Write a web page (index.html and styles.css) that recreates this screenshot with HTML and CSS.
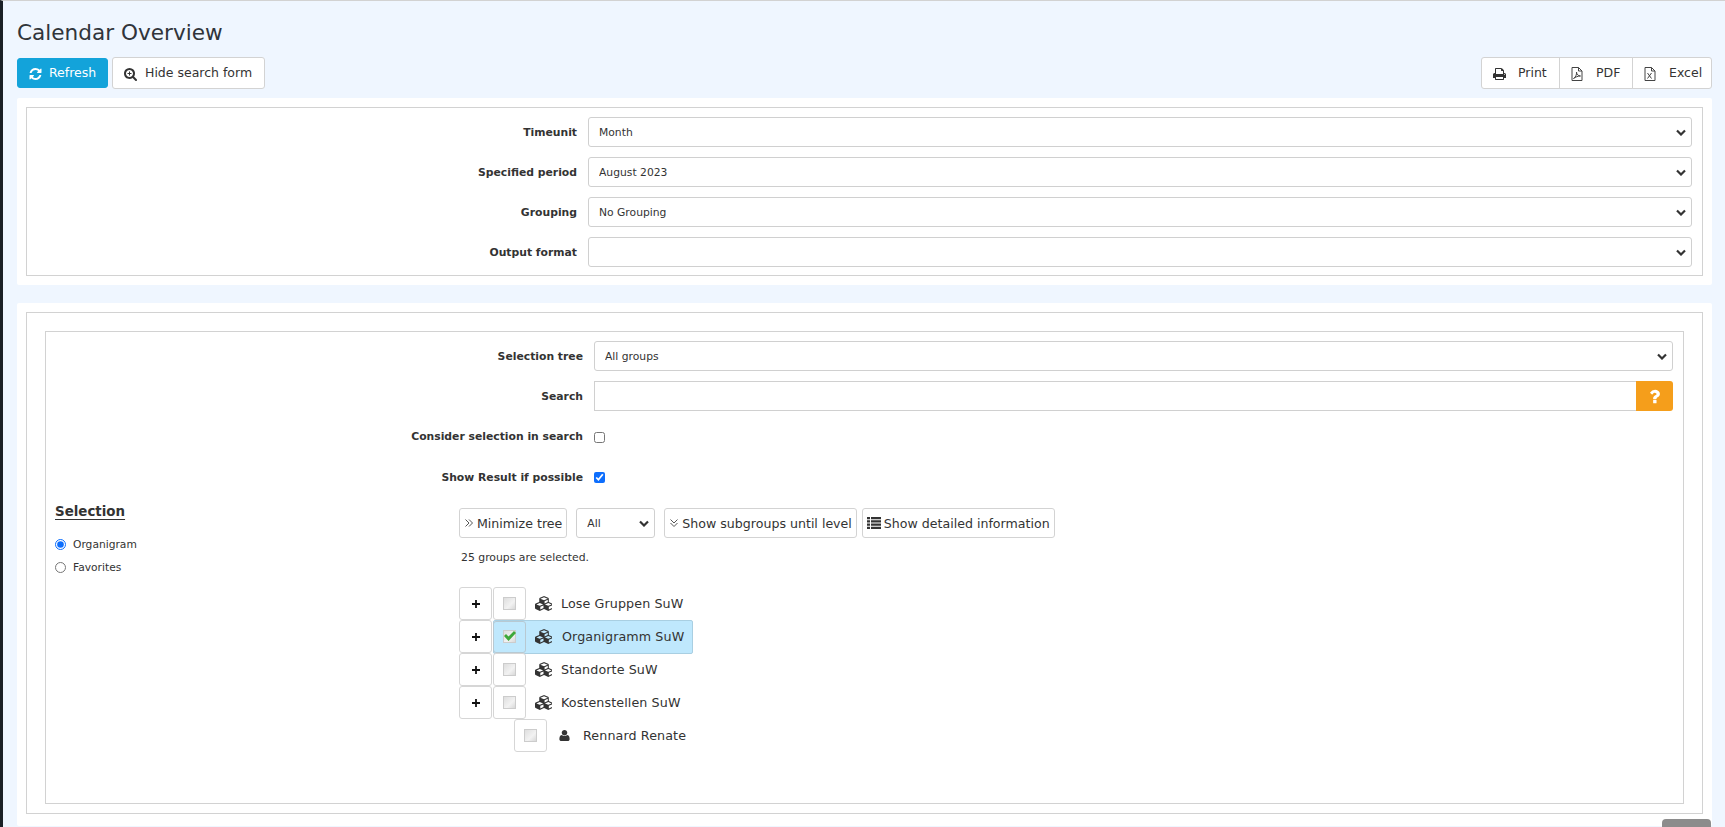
FILE: index.html
```html
<!DOCTYPE html>
<html lang="en">
<head>
<meta charset="utf-8">
<title>Calendar Overview</title>
<link rel="stylesheet" href="styles.css">
</head>
<body>
<svg class="defs" width="0" height="0" aria-hidden="true">
  <symbol id="i-refresh" viewBox="0 0 1536 1792"><path d="M1511 1056q0 5-1 7-64 268-268 434.5t-478 166.5q-146 0-282.5-55t-243.5-157l-129 129q-19 19-45 19t-45-19-19-45v-448q0-26 19-45t45-19h448q26 0 45 19t19 45-19 45l-137 137q71 66 161 102t187 36q134 0 250-65t186-179q11-17 53-117 8-23 30-23h192q13 0 22.5 9.5t9.5 22.5zm25-800v448q0 26-19 45t-45 19h-448q-26 0-45-19t-19-45 19-45l138-138q-148-137-349-137-134 0-250 65t-186 179q-11 17-53 117-8 23-30 23h-199q-13 0-22.5-9.5t-9.5-22.5v-7q65-268 270-434.5t480-166.5q146 0 284 55.5t245 156.5l130-129q19-19 45-19t45 19 19 45z"/></symbol>
  <symbol id="i-zoom" viewBox="0 0 1664 1792"><path d="M1152 832q0-185-131.5-316.5t-316.5-131.5-316.5 131.5-131.5 316.5 131.5 316.5 316.5 131.5 316.5-131.5 131.5-316.5zm512 832q0 52-38 90t-90 38q-54 0-90-38l-343-342q-179 124-399 124-143 0-273.5-55.5t-225-150-150-225-55.5-273.5 55.5-273.5 150-225 225-150 273.5-55.5 273.5 55.5 225 150 150 225 55.5 273.5q0 220-124 399l343 343q37 37 37 90z"/><rect x="448" y="768" width="512" height="128"/><rect x="640" y="576" width="128" height="512"/></symbol>
  <symbol id="i-print" viewBox="0 0 1664 1792"><path d="M384 1536h896v-256h-896v256zm0-640h896v-384h-160q-40 0-68-28t-28-68v-160h-640v640zm1152 64q0-26-19-45t-45-19-45 19-19 45 19 45 45 19 45-19 19-45zm128 0v416q0 13-9.5 22.5t-22.5 9.5h-224v160q0 40-28 68t-68 28h-960q-40 0-68-28t-28-68v-160h-224q-13 0-22.5-9.5t-9.5-22.5v-416q0-79 56.5-135.5t135.5-56.5h64v-544q0-40 28-68t68-28h672q40 0 88 20t76 48l152 152q28 28 48 76t20 88v256h64q79 0 135.5 56.5t56.5 135.5z"/></symbol>
  <symbol id="i-pdf" viewBox="0 0 12 14"><path class="line" d="M1 .5h6.500l3.500 3.500v9.500H1zM7.500.5V4H11"/><path class="line" d="M2.500 11.500c2-1 3.400-4 3-6.500.2 2.500 1.600 3.800 4 4-2.500 0-5 1-7 2.500z"/></symbol>
  <symbol id="i-excel" viewBox="0 0 12 14"><path class="line" d="M1 .5h6.500l3.500 3.500v9.500H1zM7.500.5V4H11"/><path class="line" d="M3.500 6l4 5.500M7.500 6l-4 5.500"/></symbol>
  <symbol id="i-double-right" viewBox="0 0 10 10"><path class="line" d="M1.500 1.500 5 5 1.500 8.500M5 1.500 8.500 5 5 8.500"/></symbol>
  <symbol id="i-double-down" viewBox="0 0 10 10"><path class="line" d="M1.500 1.500 5 5l3.500-3.500M1.500 5 5 8.500 8.500 5"/></symbol>
  <symbol id="i-list" viewBox="0 0 14 12"><path d="M0 0h3v2.200H0zM4 0h10v2.200H4zM0 3.200h3v2.200H0zM4 3.200h10v2.200H4zM0 6.500h3v2.200H0zM4 6.500h10v2.200H4zM0 9.700h3V12H0zM4 9.700h10V12H4z"/></symbol>
  <symbol id="i-plus" viewBox="0 0 9 9"><path d="M3.500 0h2v3.500H9v2H5.500V9h-2V5.500H0v-2h3.500z"/></symbol>
  <symbol id="i-cubes" viewBox="0 0 2048 1792"><path d="M640 1632l384-192v-314l-384 164v342zm-64-454l404-173-404-173-404 173zm1088 454l384-192v-314l-384 164v342zm-64-454l404-173-404-173-404 173zm-448-293l384-165v-266l-384 164v267zm-64-379l441-189-441-189-441 189zm1088 518v416q0 36-19 67t-52 47l-448 224q-25 14-57 14t-57-14l-448-224q-4-2-7-4-2 2-7 4l-448 224q-25 14-57 14t-57-14l-448-224q-33-16-52-47t-19-67v-416q0-38 21.500-70t56.500-48l434-186v-400q0-38 21.500-70t56.500-48l448-192q23-10 50-10t50 10l448 192q35 16 56.500 48t21.500 70v400l434 186q36 16 57 48t21 70z"/></symbol>
  <symbol id="i-user" viewBox="0 0 1408 1792"><path d="M1408 1405q0 120-73 189.500t-194 69.500h-874q-121 0-194-69.500t-73-189.500q0-53 3.500-103.500t14-109 26.500-108.500 43-97.500 62-81 85.500-53.500 111.500-20q9 0 42 21.500t74.500 48 108 48 133.500 21.500 133.500-21.500 108-48 74.500-48 42-21.500q61 0 111.500 20t85.500 53.500 62 81 43 97.500 26.500 108.500 14 109 3.500 103.500zm-320-893q0 159-112.500 271.500t-271.500 112.500-271.500-112.500-112.500-271.500 112.500-271.500 271.500-112.500 271.500 112.500 112.500 271.500z"/></symbol>
  <symbol id="i-question" viewBox="0 0 1024 1792"><path d="M704 1256v240q0 16-12 28t-28 12h-240q-16 0-28-12t-12-28v-240q0-16 12-28t28-12h240q16 0 28 12t12 28zm316-600q0 54-15.500 101t-35 76.500-55 59.500-57.500 43.500-61 35.500q-41 23-68.500 65t-27.500 67q0 17-12 32.500t-28 15.500h-240q-15 0-25.500-18.500t-10.500-37.500v-45q0-83 65-156.500t143-108.500q59-27 84-56t25-76q0-42-46.500-74t-107.500-32q-65 0-108 29-35 25-107 115-13 16-31 16-12 0-25-8l-164-125q-13-10-15.500-25t5.500-28q160-266 464-266 80 0 161 31t146 83 106 127.500 41 158.500z"/></symbol>
  <symbol id="i-check" viewBox="0 0 12 10"><path d="M0 5 2 3 4.500 5.500 10 0 12 2 4.500 10z"/></symbol>
</svg>

<main class="page">
  <h1 class="title">Calendar Overview</h1>

  <div class="toolbar">
    <div class="tool-left">
      <button class="btn btn-primary" type="button"><svg class="ico ico-13"><use href="#i-refresh"/></svg>Refresh</button>
      <button class="btn btn-hide" type="button"><svg class="ico ico-13"><use href="#i-zoom"/></svg>Hide search form</button>
    </div>
    <div class="btn-group">
      <button class="btn btn-print" type="button"><svg class="ico ico-13"><use href="#i-print"/></svg>Print</button>
      <button class="btn btn-pdf" type="button"><svg class="ico ico-doc"><use href="#i-pdf"/></svg>PDF</button>
      <button class="btn btn-excel" type="button"><svg class="ico ico-doc"><use href="#i-excel"/></svg>Excel</button>
    </div>
  </div>

  <section class="panel panel-top">
    <div class="box form-box">
      <div class="row"><label class="lab">Timeunit</label><select class="sel"><option>Month</option></select></div>
      <div class="row"><label class="lab">Specified period</label><select class="sel"><option>August 2023</option></select></div>
      <div class="row"><label class="lab">Grouping</label><select class="sel"><option>No Grouping</option></select></div>
      <div class="row"><label class="lab">Output format</label><select class="sel"><option></option></select></div>
    </div>
  </section>

  <section class="panel panel-bottom">
    <div class="box box-outer">
      <div class="box box-inner">
        <div class="row row-wide"><label class="lab">Selection tree</label><select class="sel"><option>All groups</option></select></div>
        <div class="row row-wide"><label class="lab">Search</label>
          <div class="search">
            <input class="search-input" type="text">
            <button class="help" type="button"><svg class="ico ico-help"><use href="#i-question"/></svg></button>
          </div>
        </div>
        <div class="row row-wide row-check"><label class="lab">Consider selection in search</label><input class="chk" type="checkbox"></div>
        <div class="row row-wide row-check"><label class="lab">Show Result if possible</label><input class="chk" type="checkbox" checked></div>

        <div class="selection">
          <aside class="sel-side">
            <h2 class="sel-head">Selection</h2>
            <label class="radio"><input type="radio" name="mode" checked>Organigram</label>
            <label class="radio"><input type="radio" name="mode">Favorites</label>
          </aside>
          <div class="sel-main">
            <div class="tree-tools">
              <button class="tbtn" type="button"><svg class="ico ico-chev"><use href="#i-double-right"/></svg>Minimize tree</button>
              <select class="sel sel-small"><option>All</option></select>
              <button class="tbtn tbtn-sub" type="button"><svg class="ico ico-chev"><use href="#i-double-down"/></svg>Show subgroups until level</button>
              <button class="tbtn tbtn-det" type="button"><svg class="ico ico-list"><use href="#i-list"/></svg>Show detailed information</button>
            </div>
            <p class="count">25 groups are selected.</p>
            <ul class="tree">
              <li class="node">
                <button class="tree-btn" type="button"><svg class="ico ico-plus"><use href="#i-plus"/></svg></button>
                <span class="tree-btn"><span class="tick"></span></span>
                <svg class="ico ico-cubes"><use href="#i-cubes"/></svg><span class="node-text">Lose Gruppen SuW</span>
              </li>
              <li class="node">
                <button class="tree-btn" type="button"><svg class="ico ico-plus"><use href="#i-plus"/></svg></button>
                <span class="picked">
                  <span class="tree-btn tree-btn-on"><span class="tick"><svg class="ico ico-check"><use href="#i-check"/></svg></span></span>
                  <svg class="ico ico-cubes"><use href="#i-cubes"/></svg><span class="node-text">Organigramm SuW</span>
                </span>
              </li>
              <li class="node">
                <button class="tree-btn" type="button"><svg class="ico ico-plus"><use href="#i-plus"/></svg></button>
                <span class="tree-btn"><span class="tick"></span></span>
                <svg class="ico ico-cubes"><use href="#i-cubes"/></svg><span class="node-text">Standorte SuW</span>
              </li>
              <li class="node">
                <button class="tree-btn" type="button"><svg class="ico ico-plus"><use href="#i-plus"/></svg></button>
                <span class="tree-btn"><span class="tick"></span></span>
                <svg class="ico ico-cubes"><use href="#i-cubes"/></svg><span class="node-text">Kostenstellen SuW</span>
              </li>
              <li class="node node-user">
                <span class="tree-btn"><span class="tick"></span></span>
                <svg class="ico ico-user"><use href="#i-user"/></svg><span class="node-text">Rennard Renate</span>
              </li>
            </ul>
          </div>
        </div>
      </div>
    </div>
  </section>
</main>
<div class="scroll-top"></div>
</body>
</html>
```

FILE: styles.css
```css
* { box-sizing: border-box; }
html, body { height: 100%; }
body {
  margin: 0;
  height: 827px;
  overflow: hidden;
  background: #eff6ff;
  border-left: 3px solid #1a2026;
  border-top: 1px solid #d2d2d2;
  font-family: "DejaVu Sans", Verdana, sans-serif;
  color: #333;
}
.defs { position: absolute; }
.ico { display: block; flex: none; fill: currentColor; }
.line { fill: none; stroke: currentColor; stroke-width: 1; }
.ico-13 { width: 13px; height: 14px; }
.ico-doc { width: 12px; height: 14px; color: #444; }
.ico-chev { width: 10px; height: 10px; color: #555; }
.ico-list { width: 14px; height: 12px; }
.ico-help { width: 11px; height: 19px; color: #fff; }
.ico-plus { width: 8px; height: 8px; color: #111; }
.ico-cubes { width: 17px; height: 15px; color: #333; }
.ico-user { width: 11px; height: 13px; color: #333; }
.ico-check { width: 12px; height: 10px; color: #3da83a; }

.page { padding: 0 13px 0 14px; }
.title {
  margin: 0;
  padding-top: 18px;
  height: 56px;
  font-size: 21.6px;
  font-weight: 400;
  line-height: 27px;
  color: #30343a;
}

.toolbar { display: flex; justify-content: space-between; align-items: center; height: 32px; }
.tool-left { display: flex; align-items: center; gap: 4px; }
.btn {
  display: flex;
  align-items: center;
  height: 32px;
  padding: 1px 11px 0;
  border: 1px solid #d3d3d3;
  border-radius: 3px;
  background: #fff;
  color: #333;
  font: 12.500px/1 "DejaVu Sans", Verdana, sans-serif;
}
.btn-primary { height: 30px; width: 91px; background: #13a3da; border-color: #13a3da; color: #fff; gap: 7px; }
.btn-hide { width: 153px; gap: 8px; }
.btn-group { display: flex; }
.btn-group .btn { border-radius: 0; margin-left: -1px; }
.btn-print { width: 79px; gap: 12px; border-radius: 3px 0 0 3px !important; }
.btn-pdf { width: 74px; gap: 13px; }
.btn-excel { width: 80px; gap: 13px; border-radius: 0 3px 3px 0 !important; }

.panel { background: #fff; padding: 9px; border-radius: 2px; }
.panel-top { margin-top: 9px; height: 187px; }
.panel-bottom { margin-top: 18px; height: 523px; }
.box { border: 1px solid #d2d2d2; }
.form-box { height: 169px; padding: 9px 10px 0 0; display: flex; flex-direction: column; gap: 10px; }
.box-outer { height: 502px; padding: 18px 18px 9px 18px; }
.box-inner { height: 473px; padding: 9px 10px 0 0; }

.row { display: flex; align-items: center; height: 30px; }
.lab {
  flex: none;
  width: 550px;
  margin-right: 11px;
  text-align: right;
  font-size: 10.800px;
  font-weight: 700;
  color: #333;
}
.row-wide .lab { width: 537px; }
.row-wide { margin-bottom: 10px; }
.row-wide:nth-child(2) { margin-bottom: 11px; }
.row-check { height: 30px; }
.row-check:nth-child(3) .lab { position: relative; top: -1px; }
.row-check:nth-child(4) { margin-bottom: 0; padding-top: 1px; }

.sel {
  flex: 1;
  min-width: 0;
  height: 30px;
  padding: 1px 30px 0 10px;
  appearance: none;
  border: 1px solid #d0d0d0;
  border-radius: 3px;
  background: #fff url("data:image/svg+xml,%3Csvg xmlns='http://www.w3.org/2000/svg' viewBox='0 0 10 7'%3E%3Cpath d='M1 1.500 5 5.500 9 1.500' fill='none' stroke='%23333' stroke-width='2.200'/%3E%3C/svg%3E") no-repeat right 5px center / 10px 7px;
  color: #333;
  font: 10.750px "DejaVu Sans", Verdana, sans-serif;
}
.chk { width: 11px; height: 11px; margin: 0; flex: none; accent-color: #0d6efd; }

.search { flex: 1; display: flex; height: 30px; }
.search-input { flex: 1; min-width: 0; border: 1px solid #d0d0d0; border-right: 0; outline: 0; background: #fff; }
.help {
  display: flex;
  align-items: center;
  justify-content: center;
  width: 37px;
  border: 0;
  border-radius: 0 3px 3px 0;
  background: #f59e1b;
  padding: 0;
}

.selection { display: flex; margin-top: 16px; }
.sel-side { width: 413px; flex: none; margin-top: -6px; padding-left: 9px; }
.sel-head {
  margin: 0 0 11px;
  font-size: 13.400px;
  line-height: 20px;
  font-weight: 700;
  text-decoration: underline;
  text-underline-offset: 3px;
  color: #333;
}
.radio { display: flex; align-items: center; gap: 7px; height: 23px; font-size: 10.700px; color: #333; }
.radio input { width: 11px; height: 11px; margin: 0; accent-color: #0d6efd; }

.sel-main { flex: 1; min-width: 0; }
.tree-tools { display: flex; align-items: center; height: 30px; }
.tbtn {
  display: flex;
  align-items: center;
  gap: 3px;
  height: 30px;
  padding: 0 4px;
  border: 1px solid #d3d3d3;
  border-radius: 3px;
  background: #fff;
  color: #333;
  font: 12.600px "DejaVu Sans", Verdana, sans-serif;
  white-space: nowrap;
}
.sel-small { flex: none; width: 79px; margin: 0 9px; }
.tbtn-det { margin-left: 5px; }
.count { margin: 13px 0 0; font-size: 10.850px; line-height: 13px; color: #333; padding-left: 2px; }
.tree { list-style: none; margin: 23px 0 0; padding: 0; }
.node { display: flex; align-items: center; height: 33px; font-size: 12.700px; }
.tree-btn {
  display: flex;
  align-items: center;
  justify-content: center;
  flex: none;
  width: 33px;
  height: 33px;
  padding: 0;
  border: 1px solid #d6d6d6;
  border-radius: 3px;
  background: #fff;
}
.node > .tree-btn + .tree-btn { margin-left: 1px; }
.tick {
  position: relative;
  display: block;
  width: 13px;
  height: 13px;
  border: 1px solid #ccc;
  background: linear-gradient(135deg, #dedede, #f2f2f2 60%, #d8d8d8);
}
.tick .ico-check { position: absolute; left: -0.500px; top: 0; }
.node-text { color: #333; letter-spacing: .1px; }
.node > .ico-cubes { margin: 0 9px 0 9px; }
.picked {
  display: flex;
  align-items: center;
  height: 34px;
  width: 200px;
  margin-left: 1px;
  background: #bfe8fd;
  border: 1px solid #a9cfe2;
  border-radius: 2px;
}
.picked .tree-btn { background: transparent; border-color: #b8c9d2; height: 32px; margin-left: -1px; }
.picked .ico-cubes { margin: 0 10px 0 9px; }
.node-user { padding-left: 55px; }
.node-user .ico-user { margin: 0 13px 0 12px; }
.scroll-top {
  position: fixed;
  right: 14px;
  bottom: 0;
  width: 49px;
  height: 8px;
  background: #8c8c8c;
  border-radius: 4px 4px 0 0;
}
```
